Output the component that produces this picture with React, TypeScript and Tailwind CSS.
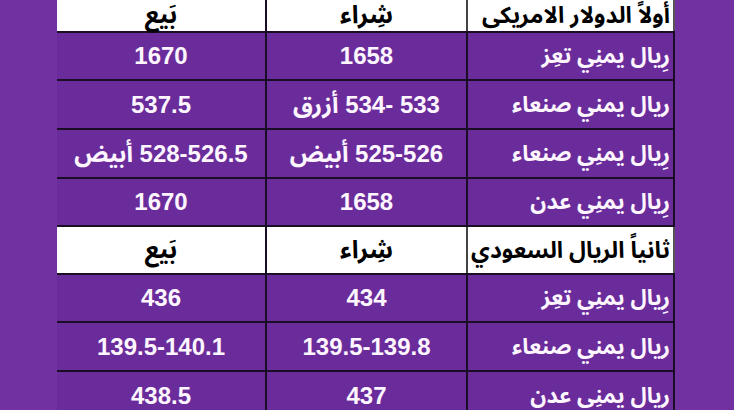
import React from "react";

type Row = { kind: "head" | "data"; label: string; buy: string; sell: string; h: string };

const rows: Row[] = [
  { kind: "head", label: "أولاً الدولار الامريكى", buy: "شِراء", sell: "بَيع", h: "h-[33px]" },
  { kind: "data", label: "رِيال يمنِي تعِز", buy: "1658", sell: "1670", h: "h-[48px]" },
  { kind: "data", label: "ريال يمني صنعاء", buy: "533 -534 أزرق", sell: "537.5", h: "h-[49px]" },
  { kind: "data", label: "رِيال يمنِي صنعاء", buy: "525-526 أبيض", sell: "528-526.5 أبيض", h: "h-[49px]" },
  { kind: "data", label: "رِيال يمنِي عدن", buy: "1658", sell: "1670", h: "h-[48px]" },
  { kind: "head", label: "ثانياً الريال السعودي", buy: "شِراء", sell: "بَيع", h: "h-[48px]" },
  { kind: "data", label: "رِيال يمنِي تعِز", buy: "434", sell: "436", h: "h-[48px]" },
  { kind: "data", label: "ريال يمني صنعاء", buy: "139.5-139.8", sell: "139.5-140.1", h: "h-[49px]" },
  { kind: "data", label: "ريال يمنِي عدن", buy: "437", sell: "438.5", h: "h-[49px]" },
];

function Row({ r }: { r: Row }) {
  const isHead = r.kind === "head";
  return (
    <div
      className={`grid grid-cols-[209px_201px_208px] ${r.h} shrink-0 border-b-2 border-[#1c0d26] ${
        isHead ? "bg-white text-black" : "bg-[#6b2c9b] text-[#fdf6ff]"
      }`}
    >
      <div
        className={`flex items-center justify-start pr-[3px] border-r-2 border-l-2 overflow-hidden font-['Noto_Sans_Arabic','DejaVu_Sans',sans-serif] font-bold leading-none whitespace-nowrap ${
          isHead
            ? "border-r-[#555] border-l-[#444] text-[23px]"
            : "border-r-[#1c0d26] border-l-[#1c0d26] text-[22px]"
        }`}
      >
        {r.label}
      </div>
      <div
        className={`flex items-center justify-center border-l-2 border-[#1c0d26] font-bold leading-none whitespace-nowrap ${
          isHead
            ? "text-[25px] font-['Noto_Sans_Arabic','DejaVu_Sans',sans-serif]"
            : "text-[24px]"
        }`}
      >
        {r.buy}
      </div>
      <div
        className={`flex items-center justify-center font-bold leading-none whitespace-nowrap ${
          isHead
            ? "text-[25px] font-['Noto_Sans_Arabic','DejaVu_Sans',sans-serif]"
            : "text-[24px]"
        }`}
      >
        {r.sell}
      </div>
    </div>
  );
}

export default function App() {
  return (
    <div className="w-[734px] h-[410px] overflow-hidden bg-[#7131a1] flex font-['Liberation_Sans','Noto_Sans_Arabic','DejaVu_Sans',sans-serif]">
      <div className="ml-[57px] w-[618px] flex flex-col" dir="rtl">
        {rows.map((r, i) => (
          <Row key={i} r={r} />
        ))}
      </div>
    </div>
  );
}
